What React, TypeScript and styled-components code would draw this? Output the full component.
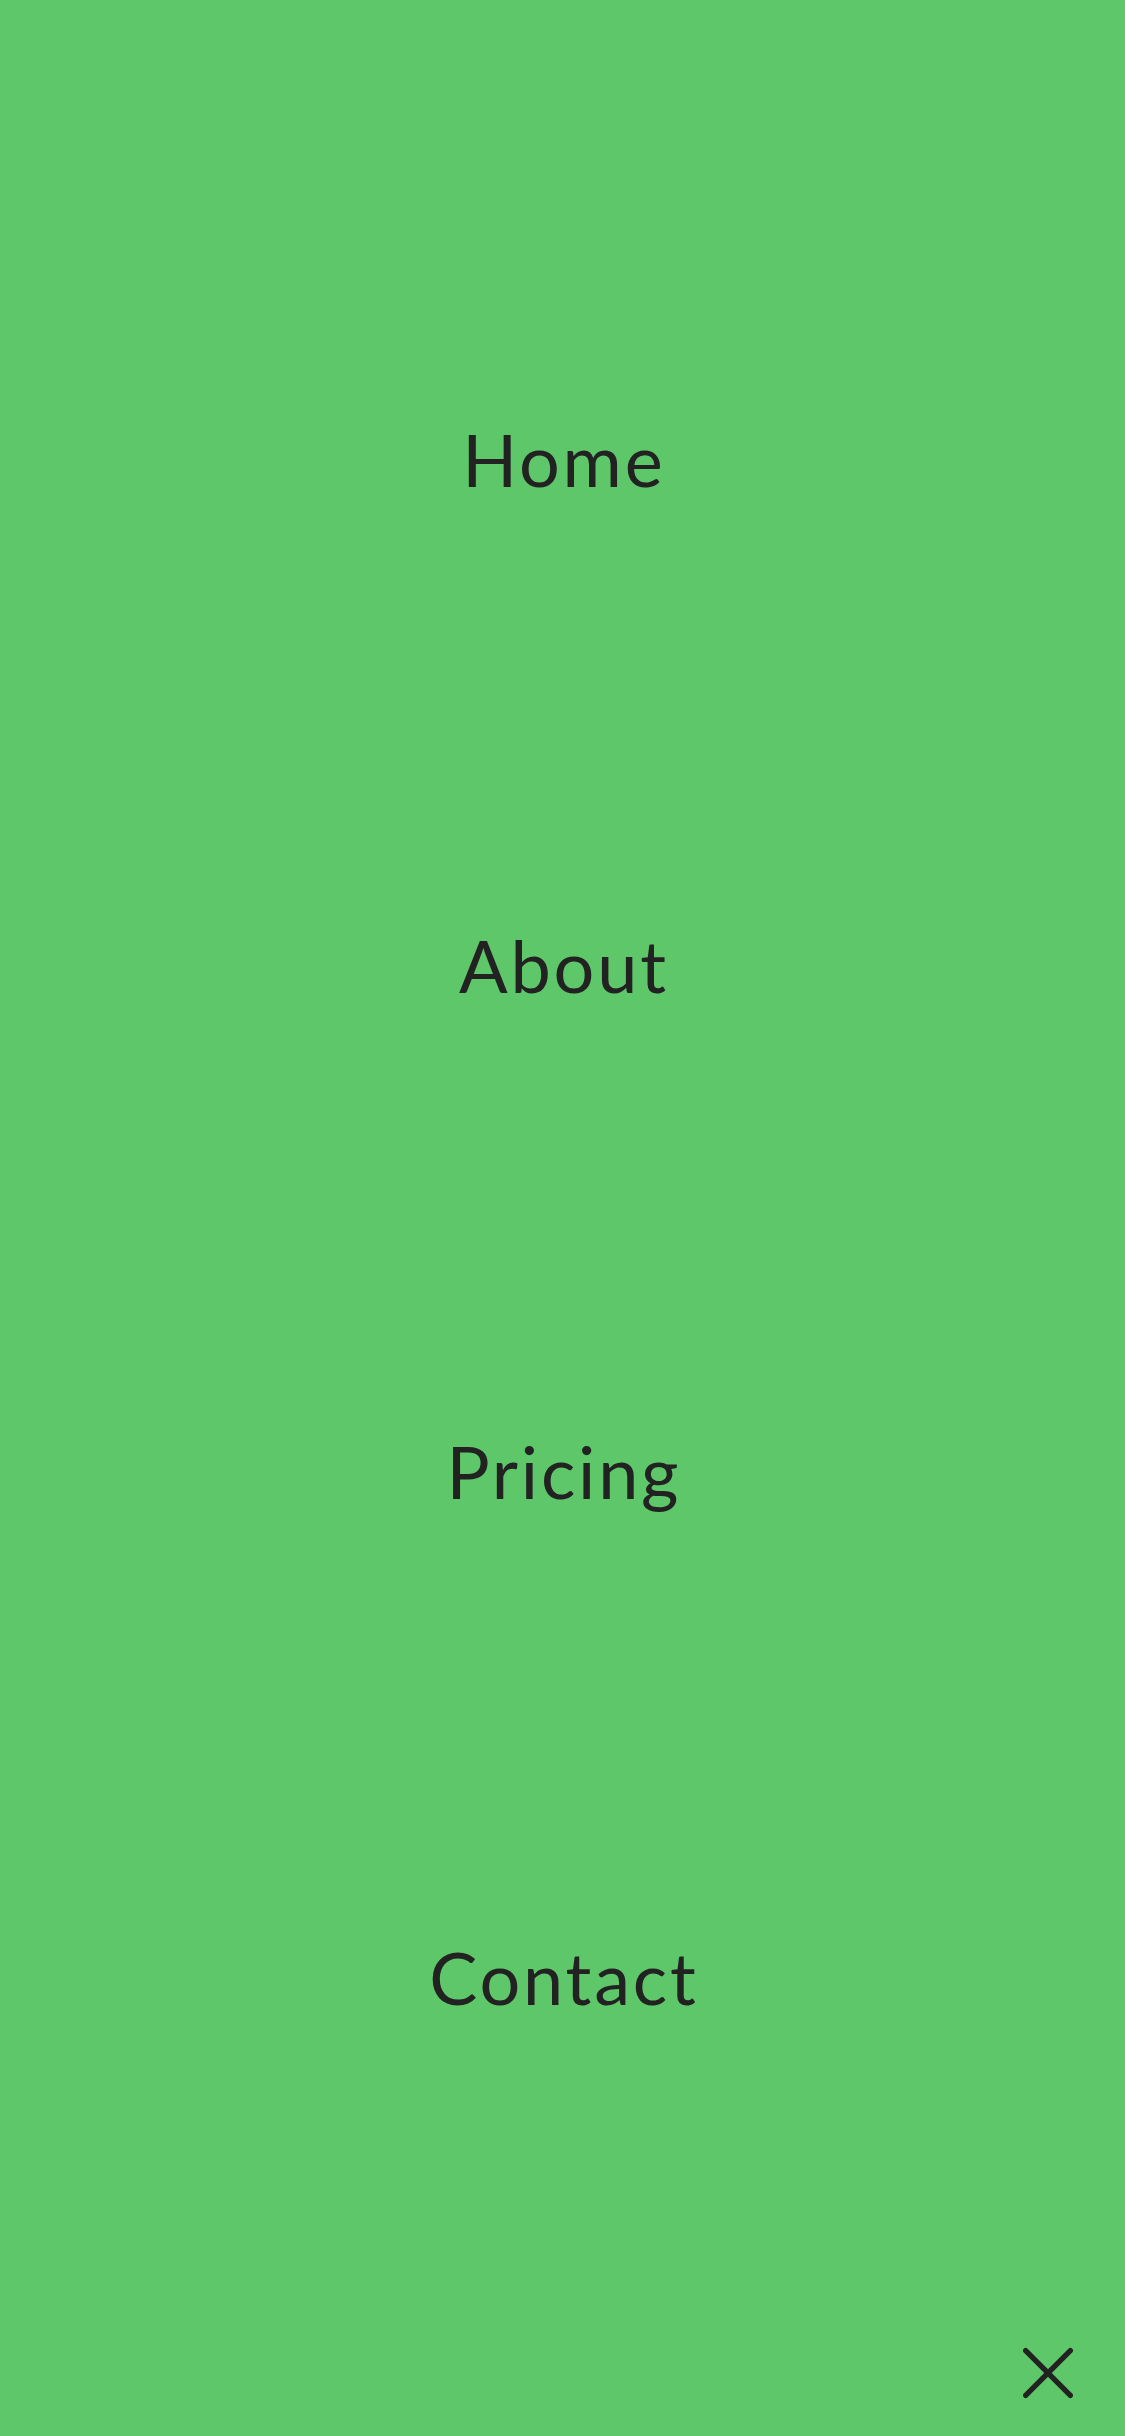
import React from "react";
import styled, { createGlobalStyle } from "styled-components";

const Global = createGlobalStyle`
  html, body { margin: 0; padding: 0; }
  body { background: #5ec769; font-family: Lato, "Open Sans", sans-serif; }
`;

const Screen = styled.div`
  position: relative;
  width: 1125px;
  height: 2436px;
  background: #5ec769;
  overflow: hidden;
`;

const Menu = styled.nav`
  display: flex;
  flex-direction: column;
  padding: 206px 0;
`;

const Item = styled.a`
  height: 506px;
  display: flex;
  align-items: center;
  justify-content: center;
  font-size: 72px;
  font-weight: 400;
  line-height: 1;
  color: #222222;
  text-decoration: none;
  letter-spacing: 2.8px;
  padding-left: 2.8px;
`;

const Close = styled.button`
  position: absolute;
  right: 52px;
  bottom: 38px;
  width: 50px;
  height: 50px;
  padding: 0;
  border: 0;
  background: transparent;
  display: flex;
  align-items: center;
  justify-content: center;
  cursor: pointer;
`;

const items = ["Home", "About", "Pricing", "Contact"];

export default function App() {
  return (
    <Screen>
      <Global />
      <Menu>
        {items.map((label) => (
          <Item key={label} href="#">
            {label}
          </Item>
        ))}
      </Menu>
      <Close aria-label="Close menu">
        <svg width="56" height="56" viewBox="0 0 56 56">
          <path
            d="M3 3 L53 53 M53 3 L3 53"
            stroke="#222222"
            strokeWidth="6"
            strokeLinecap="round"
            fill="none"
          />
        </svg>
      </Close>
    </Screen>
  );
}
